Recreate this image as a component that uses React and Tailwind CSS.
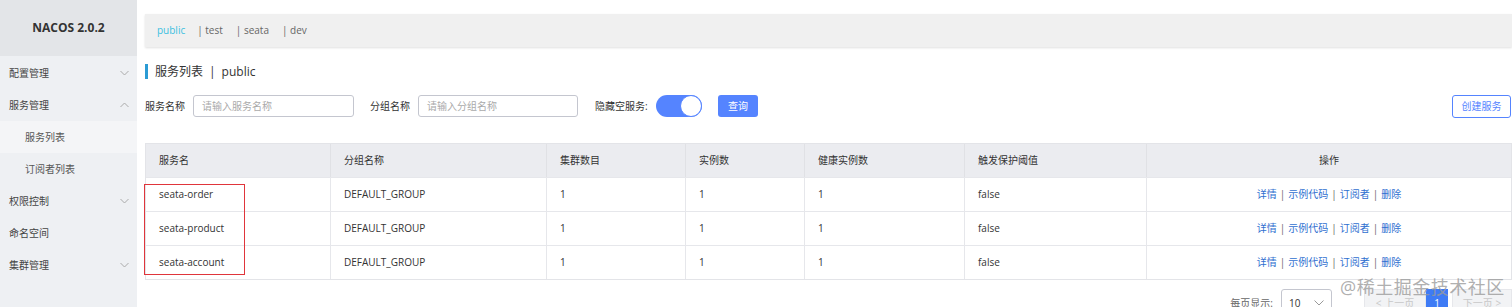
import React from 'react';

const font = { fontFamily: '"Open Sans", "Noto Sans CJK SC", sans-serif' };

const Chevron = ({ up }) => (
  <svg width="9" height="6" viewBox="0 0 9 6" className="text-[#aaa]">
    <path d={up ? 'M0.5 5 L4.5 1 L8.5 5' : 'M0.5 1 L4.5 5 L8.5 1'} fill="none" stroke="currentColor" strokeWidth="1" />
  </svg>
);

const menu = [
  { label: '配置管理', arrow: 'down' },
  { label: '服务管理', arrow: 'up' },
  { label: '服务列表', sub: true, active: true },
  { label: '订阅者列表', sub: true },
  { label: '权限控制', arrow: 'down' },
  { label: '命名空间' },
  { label: '集群管理', arrow: 'down' },
];

const rows = ['seata-order', 'seata-product', 'seata-account'];
const cols = 'grid grid-cols-[184px_216px_139px_119px_160px_182px_1fr]';

function Sidebar() {
  return (
    <div className="w-[137px] shrink-0 bg-[#eef0f3] h-full">
      <div className="h-[56px] bg-[#e3e5e8] flex items-center justify-center text-[12px] font-bold text-[#333]">
        NACOS 2.0.2
      </div>
      <div className="pt-[1px]">
        {menu.map((m) => (
          <div
            key={m.label}
            className={`h-[32px] flex items-center justify-between pr-[8px] text-[10px] ${
              m.sub ? 'pl-[25px] text-[#555]' : 'pl-[9px] text-[#444]'
            } ${m.active ? 'bg-[#f4f5f7]' : ''}`}
          >
            <span>{m.label}</span>
            {m.arrow ? <Chevron up={m.arrow === 'up'} /> : null}
          </div>
        ))}
      </div>
    </div>
  );
}

function Search() {
  return (
    <div className="mt-[16px] flex items-center h-[22px] text-[10px] pr-[1px]">
      <span className="text-[#333] w-[48px]">服务名称</span>
      <div className="w-[161px] h-[22px] border border-[#c4c6cf] rounded-[3px] flex items-center px-[8px] text-[#aaa]">
        请输入服务名称
      </div>
      <span className="text-[#333] ml-[16px] w-[48px]">分组名称</span>
      <div className="w-[160px] h-[22px] border border-[#c4c6cf] rounded-[3px] flex items-center px-[8px] text-[#aaa]">
        请输入分组名称
      </div>
      <span className="text-[#333] ml-[17px] w-[61px]">隐藏空服务:</span>
      <div className="w-[46px] h-[22px] rounded-full bg-[#5584ff] flex items-center justify-end">
        <div className="w-[22px] h-[22px] rounded-full bg-white border border-[#5584ff]" />
      </div>
      <div className="ml-[16px] w-[40px] h-[22px] rounded-[3px] bg-[#5584ff] text-white flex items-center justify-center">
        查询
      </div>
      <div className="ml-auto w-[59px] h-[23px] rounded-[3px] border border-[#5584ff] text-[#5584ff] bg-white flex items-center justify-center">
        创建服务
      </div>
    </div>
  );
}

function Table() {
  const head = ['服务名', '分组名称', '集群数目', '实例数', '健康实例数', '触发保护阈值'];
  return (
    <div className="relative mt-[26px] border border-[#e3e4e8] text-[10px] text-[#333]">
      <div className={`${cols} h-[33px] bg-[#ebecf0] items-stretch`}>
        {head.map((h, i) => (
          <div key={h} className={`flex items-center pl-[13px] ${i ? 'border-l border-[#e0e1e5]' : ''}`}>
            {h}
          </div>
        ))}
        <div className="flex items-center justify-center border-l border-[#e0e1e5]">操作</div>
      </div>
      {rows.map((r) => (
        <div key={r} className={`${cols} h-[34px] border-t border-[#e6e7eb] bg-white`}>
          <div className="flex items-center pl-[13px]">{r}</div>
          <div className="flex items-center pl-[13px] border-l border-[#e6e7eb]">DEFAULT_GROUP</div>
          <div className="flex items-center pl-[13px] border-l border-[#e6e7eb]">1</div>
          <div className="flex items-center pl-[13px] border-l border-[#e6e7eb]">1</div>
          <div className="flex items-center pl-[13px] border-l border-[#e6e7eb]">1</div>
          <div className="flex items-center pl-[13px] border-l border-[#e6e7eb]">false</div>
          <div className="flex items-center justify-center gap-[3px] border-l border-[#e6e7eb] text-[#2f6fd0]">
            <span>详情</span>
            <span className="text-[#666]">|</span>
            <span>示例代码</span>
            <span className="text-[#666]">|</span>
            <span>订阅者</span>
            <span className="text-[#666]">|</span>
            <span>删除</span>
          </div>
        </div>
      ))}
      <div className="absolute left-[-2px] top-[40px] w-[101px] h-[91px] border border-[#e0353b]" />
    </div>
  );
}

function Pager() {
  return (
    <div className="mt-[9px] flex items-center justify-end text-[10px] h-[28px]">
      <span className="text-[#666]">每页显示:</span>
      <div className="ml-[8px] w-[51px] h-[28px] border border-[#c4c6cf] rounded-[3px] flex items-center justify-between px-[7px] text-[#333]">
        <span>10</span>
        <svg width="10" height="6" viewBox="0 0 10 6">
          <path d="M0.5 0.5 L5 5 L9.5 0.5" fill="none" stroke="#999" strokeWidth="1" />
        </svg>
      </div>
      <div className="ml-[32px] w-[62px] h-[28px] bg-[#f2f3f5] border border-[#e6e7eb] flex items-center justify-center text-[#c8c8c8]">
        &lt; 上一页
      </div>
      <div className="w-[22px] h-[28px] bg-[#3e7bf5] text-white flex items-center justify-center">1</div>
      <div className="ml-[4px] w-[60px] h-[28px] bg-[#f2f3f5] border border-[#e6e7eb] flex items-center justify-center text-[#c8c8c8]">
        下一页 &gt;
      </div>
    </div>
  );
}

export default function App() {
  return (
    <div className="relative w-[1512px] h-[307px] overflow-hidden flex bg-white" style={font}>
      <Sidebar />
      <div className="flex-1 pl-[8px] pt-[14px]">
        <div className="h-[33px] bg-[#f0f0f0] shadow-[0_1px_2px_rgba(0,0,0,0.12)] flex items-center pl-[12px] text-[10px] text-[#666]">
          <span className="text-[#3cc0e0]">public</span>
          <span className="ml-[12px]">| test</span>
          <span className="ml-[13px]">| seata</span>
          <span className="ml-[13px]">| dev</span>
        </div>
        <div className="mt-[17px] h-[15px] border-l-[3px] border-[#2b9bd4] pl-[7px] flex items-center text-[12px] text-[#333]">
          服务列表 <span className="mx-[6px]">|</span> public
        </div>
        <Search />
        <Table />
        <Pager />
      </div>
      <div className="absolute left-[1340px] top-[274px] text-[18px] text-[#9a9a9a]/80 tracking-[0.5px] pointer-events-none">
        @稀土掘金技术社区
      </div>
    </div>
  );
}
